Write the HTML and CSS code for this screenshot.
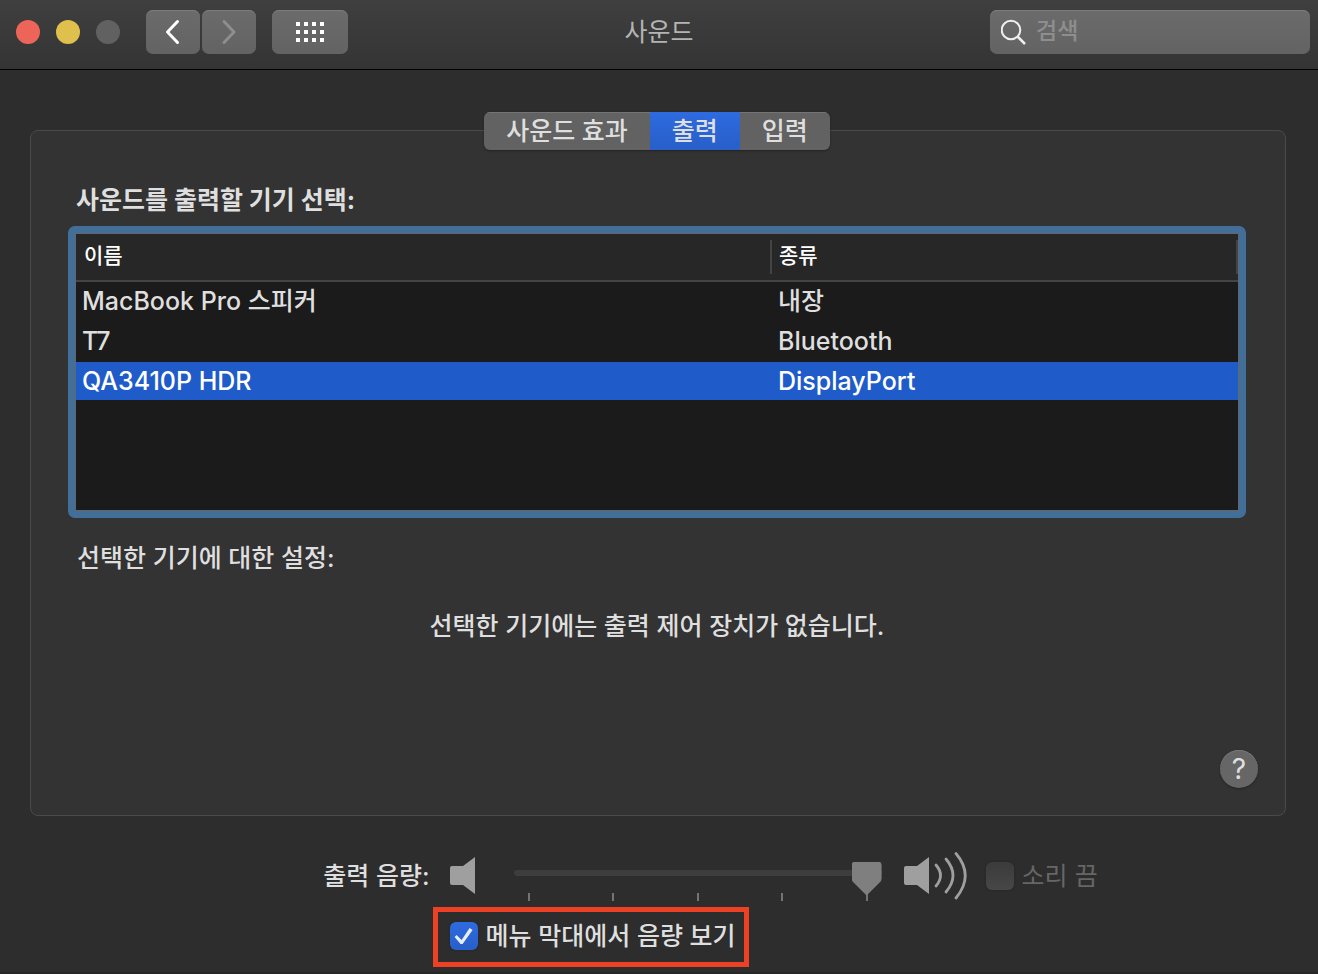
FILE: index.html
```html
<!DOCTYPE html>
<html lang="ko">
<head>
    <meta charset="UTF-8">
    <meta name="viewport" content="width=device-width, initial-scale=1.0">
    <title>사운드</title>
    <link rel="stylesheet" href="styles.css">
</head>
<body>
    <header class="toolbar">
        <div class="toolbar-left">
            <div class="lights">
                <button class="light red" aria-label="닫기"></button>
                <button class="light yellow" aria-label="최소화"></button>
                <button class="light gray" aria-label="확대" disabled></button>
            </div>
            <div class="nav-buttons">
                <button class="tool-btn" aria-label="뒤로">
                    <svg width="16" height="26" viewBox="0 0 16 26"><path d="M12.500 2.500 2.500 13l10 10.500" fill="none" stroke="#fff" stroke-width="3" stroke-linecap="round" stroke-linejoin="round"/></svg>
                </button>
                <button class="tool-btn" aria-label="앞으로" disabled>
                    <svg width="16" height="26" viewBox="0 0 16 26"><path d="M3 2.500 13 13 3 23.500" fill="none" stroke="#8e8e8e" stroke-width="3" stroke-linecap="round" stroke-linejoin="round"/></svg>
                </button>
            </div>
            <button class="tool-btn wide" aria-label="모두 보기">
                <svg width="28" height="20" viewBox="0 0 28 20" fill="#fff">
                    <path d="M0 0h4v4H0zM8 0h4v4H8zM16 0h4v4h-4zM24 0h4v4h-4zM0 8h4v4H0zM8 8h4v4H8zM16 8h4v4h-4zM24 8h4v4h-4zM0 16h4v4H0zM8 16h4v4H8zM16 16h4v4h-4zM24 16h4v4h-4z"/>
                </svg>
            </button>
        </div>
        <h1 class="title">사운드</h1>
        <label class="search">
            <svg width="26" height="26" viewBox="0 0 26 26" fill="none" stroke="#eee" stroke-width="2"><circle cx="10" cy="11" r="9.300"/><path d="M16.500 17.500l7.500 7.500" stroke-width="2.500"/></svg>
            <input type="search" placeholder="검색" aria-label="검색">
        </label>
    </header>

    <main class="content">
        <section class="panel">
            <nav class="tabs">
                <button class="tab">사운드 효과</button>
                <button class="tab active">출력</button>
                <button class="tab">입력</button>
            </nav>

            <h2 class="panel-title">사운드를 출력할 기기 선택:</h2>
            <div class="device-list">
                <table class="devices">
                    <thead>
                        <tr>
                            <th>이름</th>
                            <th class="col-type"><span class="divider">종류</span></th>
                        </tr>
                    </thead>
                    <tbody>
                        <tr><td>MacBook Pro 스피커</td><td>내장</td></tr>
                        <tr><td>T7</td><td>Bluetooth</td></tr>
                        <tr class="selected"><td>QA3410P HDR</td><td>DisplayPort</td></tr>
                    </tbody>
                </table>
            </div>

            <p class="settings-label">선택한 기기에 대한 설정:</p>
            <p class="settings-message">선택한 기기에는 출력 제어 장치가 없습니다.</p>
            <button class="help" aria-label="도움말">?</button>
        </section>

        <section class="volume">
            <label class="volume-label" for="volume">출력 음량:</label>
            <div class="volume-row">
                <svg class="speaker" width="26" height="38" viewBox="0 0 26 38"><path d="M2 9h11L25 0v37L13 28H2q-2 0-2-2V11q0-2 2-2z" fill="#9f9f9f"/></svg>
                <div class="slider">
                    <input type="range" id="volume" min="0" max="100" value="100" disabled>
                    <div class="ticks"><i></i><i></i><i></i><i></i><i></i></div>
                </div>
                <svg class="speaker-loud" width="64" height="48" viewBox="0 0 64 48">
                    <path d="M2 14h11L25 5v37L13 33H2q-2 0-2-2V16q0-2 2-2z" fill="#9f9f9f"/>
                    <g fill="none" stroke="#9f9f9f" stroke-width="2.800" stroke-linecap="round">
                        <path d="M32 13q9 10.500 0 21"/>
                        <path d="M42 7q14 16.500 0 33"/>
                        <path d="M52 1.500q18.500 22 0 44.500"/>
                    </g>
                </svg>
                <label class="check mute"><input type="checkbox" disabled>소리 끔</label>
            </div>
            <div class="highlight">
                <label class="check"><input type="checkbox" checked>메뉴 막대에서 음량 보기</label>
            </div>
        </section>
    </main>
</body>
</html>
```
FILE: styles.css
```css
* {
    margin: 0;
    padding: 0;
    box-sizing: border-box;
}

body {
    min-height: 100vh;
    background-color: #2d2d2d;
    color: #dfdfdf;
    font-family: Inter, "Noto Sans CJK KR", sans-serif;
    font-size: 25px;
    font-weight: 500;
    line-height: 32px;
    border-bottom: 2px solid #262626;
}

button,
input {
    font: inherit;
    color: inherit;
    border: none;
}

svg {
    display: block;
}

/* Toolbar */
.toolbar {
    display: grid;
    grid-template-columns: 1fr auto 1fr;
    align-items: center;
    height: 70px;
    padding: 0 8px 5px;
    background: linear-gradient(#3f3f3f, #343434);
    border-bottom: 1px solid #000;
}

.toolbar-left {
    display: flex;
    align-items: center;
    gap: 16px;
}

.lights {
    display: flex;
    gap: 16px;
    margin: 0 10px 0 8px;
}

.light {
    width: 24px;
    height: 24px;
    border-radius: 50%;
}

.red {
    background-color: #ed6559;
}

.yellow {
    background-color: #e0c04c;
}

.gray {
    background-color: #616161;
}

.nav-buttons {
    display: flex;
    gap: 2px;
}

.tool-btn {
    display: flex;
    align-items: center;
    justify-content: center;
    width: 54px;
    height: 44px;
    background: linear-gradient(#6b6b6b, #636363);
    border-radius: 7px;
    box-shadow: inset 0 1px #7c7c7c;
}

.wide {
    width: 76px;
}

.title {
    font-size: 25px;
    font-weight: 400;
    color: #b4b4b4;
}

.search {
    display: flex;
    align-items: center;
    gap: 9px;
    justify-self: end;
    width: 320px;
    height: 44px;
    padding: 0 11px;
    background: linear-gradient(#6b6b6b, #636363);
    border-radius: 7px;
    box-shadow: inset 0 1px #7c7c7c;
}

.search svg {
    flex: none;
}

.search input {
    flex: 1;
    min-width: 0;
    height: 40px;
    padding-bottom: 2px;
    background: none;
    outline: none;
    font-size: 23px;
}

.search input::placeholder {
    color: #8e8e8e;
}

/* Panel */
.content {
    padding: 60px 32px 0 30px;
}

.panel {
    display: flex;
    flex-direction: column;
    min-height: 686px;
    padding: 0 39px 27px 37px;
    background-color: #333;
    border: 1px solid #4a4a4a;
    border-radius: 8px;
}

.tabs {
    display: flex;
    align-self: center;
    margin-top: -19px;
    border-radius: 6px;
    overflow: hidden;
    box-shadow: 0 1px 2px #222;
}

.tab {
    height: 38px;
    padding: 0 22px;
    background: #626262;
    box-shadow: inset 0 1px #747474;
    line-height: 36px;
}

.tab.active {
    background: linear-gradient(#2e6be0, #285fc8);
    box-shadow: none;
}

.panel-title {
    margin: 34px 0 10px 8px;
    font-size: 25px;
    font-weight: 700;
}

.device-list {
    height: 292px;
    padding: 0 1px;
    background-color: #1b1b1b;
    border: 7px solid #416f99;
    border-radius: 7px;
    outline: 1px solid #666;
    outline-offset: -8px;
}

.devices {
    width: 100%;
    border-spacing: 0;
    table-layout: fixed;
    text-align: left;
}

.devices th {
    height: 49px;
    padding: 0 8px 2px;
    background-color: #272727;
    border-bottom: 2px solid #444;
    color: #fff;
    font-size: 21px;
    font-weight: 500;
}

.devices .col-type {
    width: 468px;
    padding: 0;
}

.divider {
    display: block;
    height: 34px;
    padding-left: 7px;
    border: solid #444;
    border-width: 0 2px;
    line-height: 31px;
}

.devices td {
    height: 40px;
    padding: 0 6px;
    border-bottom: 2px solid transparent;
    background-clip: padding-box;
}

.devices td + td {
    padding-left: 8px;
}

.selected td {
    background-color: #1f5bc9;
    color: #fff;
}

.settings-label {
    margin: 24px 0 0 9px;
}

.settings-message {
    margin-top: 36px;
    text-align: center;
}

.help {
    align-self: flex-end;
    width: 38px;
    height: 38px;
    margin-top: auto;
    margin-right: -12px;
    background-color: #666;
    border-radius: 50%;
    box-shadow: inset 0 1px #777, 0 1px 2px #222;
    font-size: 28px;
    font-weight: 400;
}

/* Volume */
.volume {
    display: grid;
    grid-template-columns: auto auto;
    justify-content: center;
    column-gap: 20px;
    row-gap: 7px;
    padding: 35px 0 0 105px;
}

.volume-label {
    padding-top: 9px;
}

.volume-row {
    display: flex;
    align-items: center;
    height: 49px;
}

.slider {
    width: 368px;
    margin: 19px 22px 0 38px;
}

.slider input {
    display: block;
    width: 100%;
    height: 6px;
    background-color: #3d3d3d;
    border-radius: 3px;
    appearance: none;
}

.slider input::-webkit-slider-thumb {
    appearance: none;
    width: 30px;
    height: 34px;
    margin-top: 12px;
    background-color: #7f7f7f;
    clip-path: path("M4 0H26Q30 0 30 4V17Q30 19 28 21L15 34L2 21Q0 19 0 17V4Q0 0 4 0Z");
}

.ticks {
    display: flex;
    justify-content: space-between;
    margin-top: 17px;
    padding: 0 14px;
}

.ticks i {
    width: 2px;
    height: 8px;
    background-color: #737373;
}

.check {
    display: flex;
    align-items: center;
    gap: 8px;
}

.check input {
    width: 28px;
    height: 28px;
    background: linear-gradient(#3b3b3b, #474747);
    border-radius: 6px;
    box-shadow: 0 0 2px #222;
    appearance: none;
}

.check input:checked {
    background: linear-gradient(#2e6be0, #285fc8);
}

.check input:checked::before {
    content: "";
    display: block;
    width: 28px;
    height: 28px;
    background-color: #e8edfa;
    clip-path: polygon(5px 15px, 7px 13px, 12px 18px, 20px 6px, 23px 8px, 13px 22px, 11px 22px);
}

.mute {
    margin-left: 18px;
    color: #666;
    font-weight: 400;
}

.highlight {
    grid-column: 2;
    justify-self: start;
    margin-left: -17px;
    padding: 8px 8px 10px 12px;
    border: 5px solid #ed4126;
}
```
